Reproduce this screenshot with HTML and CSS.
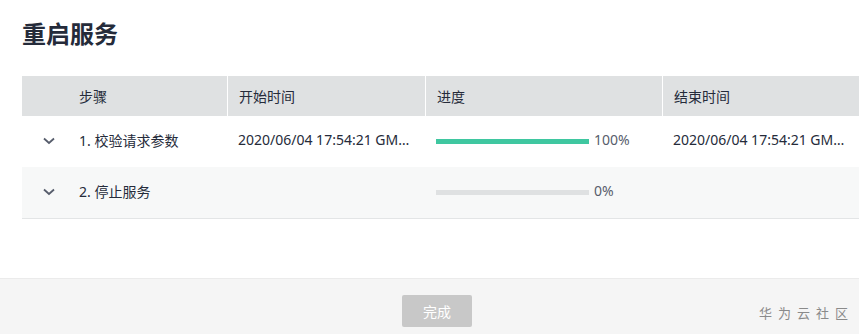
FILE: index.html
```html
<!DOCTYPE html>
<html lang="zh">
<head>
  <meta charset="UTF-8">
  <title>重启服务</title>
  <link rel="stylesheet" href="styles.css">
</head>
<body>
  <div class="dialog">
    <h1 class="title">重启服务</h1>

    <!-- 任务步骤表格 -->
    <div class="task-table">
      <div class="row head">
        <div class="cell step">步骤</div>
        <div class="cell">开始时间</div>
        <div class="cell">进度</div>
        <div class="cell">结束时间</div>
      </div>

      <div class="row">
        <div class="cell step">
          <svg class="chevron" width="12" height="8" viewBox="0 0 12 8"><path d="M1 1.5 L6 6 L11 1.5" fill="none" stroke="#575d6c" stroke-width="1.8"/></svg>
          <span>1. 校验请求参数</span>
        </div>
        <div class="cell ellipsis">2020/06/04 17:54:21 GMT+08:00</div>
        <div class="cell">
          <div class="progress"><div class="bar" style="width: 100%"></div></div>
          <span class="pct">100%</span>
        </div>
        <div class="cell ellipsis">2020/06/04 17:54:21 GMT+08:00</div>
      </div>

      <div class="row alt">
        <div class="cell step">
          <svg class="chevron" width="12" height="8" viewBox="0 0 12 8"><path d="M1 1.5 L6 6 L11 1.5" fill="none" stroke="#575d6c" stroke-width="1.8"/></svg>
          <span>2. 停止服务</span>
        </div>
        <div class="cell"></div>
        <div class="cell">
          <div class="progress"><div class="bar" style="width: 0%"></div></div>
          <span class="pct">0%</span>
        </div>
        <div class="cell"></div>
      </div>
    </div>
  </div>

  <div class="footer">
    <button class="btn-done" disabled>完成</button>
    <span class="watermark">华为云社区</span>
  </div>
</body>
</html>
```

FILE: styles.css
```css
/* Grundlayout */
body {
  margin: 0;
  font-family: "Noto Sans", "Noto Sans CJK SC", sans-serif;
  color: #252b3a;
  background: #fff;
  width: 859px;
  height: 334px;
  overflow: hidden;
  display: flex;
  flex-direction: column;
}

.dialog {
  flex: 1;
  padding: 0 0 0 22px;
}

.title {
  font-size: 24px;
  font-weight: bold;
  margin: 17px 0 0 0;
  height: 33px;
  line-height: 33px;
  color: #252b3a;
}

/* Tabelle */
.task-table {
  margin-top: 26px;
  border-bottom: 1px solid #e3e5e6;
}

.row {
  display: grid;
  grid-template-columns: 205px 198px 237px 1fr;
  height: 51px;
  font-size: 14px;
}

.row.head {
  height: 40px;
  background: #dfe1e2;
  color: #252b3a;
}

.row.head .cell + .cell {
  border-left: 1px solid #fff;
}

.row.alt {
  background: #f7f8f8;
}

.cell {
  display: flex;
  align-items: center;
  padding-left: 11px;
  overflow: hidden;
  white-space: nowrap;
}

.row:not(.head) .cell {
  padding-bottom: 4px;
}

.cell.step {
  padding-left: 57px;
}

.row:not(.head) .cell.step {
  padding-left: 21px;
}

.chevron {
  margin-right: 24px;
  margin-top: 2px;
}

.ellipsis {
  display: block;
  line-height: 47px;
  text-overflow: ellipsis;
  padding-right: 8px;
}

/* Fortschritt */
.progress {
  width: 153px;
  height: 5px;
  background: #dfe1e2;
  margin-top: 3px;
}

.bar {
  height: 100%;
  background: #3fc7a0;
}

.pct {
  margin-left: 5px;
  color: #575d6c;
}

/* Fußbereich */
.footer {
  height: 55px;
  background: #f5f5f5;
  border-top: 1px solid #ebebeb;
  display: flex;
  align-items: center;
  justify-content: center;
  position: relative;
}

.btn-done {
  width: 70px;
  height: 32px;
  margin: 8px 0 0 15px;
  border: none;
  border-radius: 2px;
  background: #c8c8c8;
  color: #fff;
  font-family: inherit;
  font-size: 14px;
}

.watermark {
  position: absolute;
  right: 5px;
  top: 24px;
  font-size: 13px;
  letter-spacing: 6px;
  color: #8a8a8a;
}
```
